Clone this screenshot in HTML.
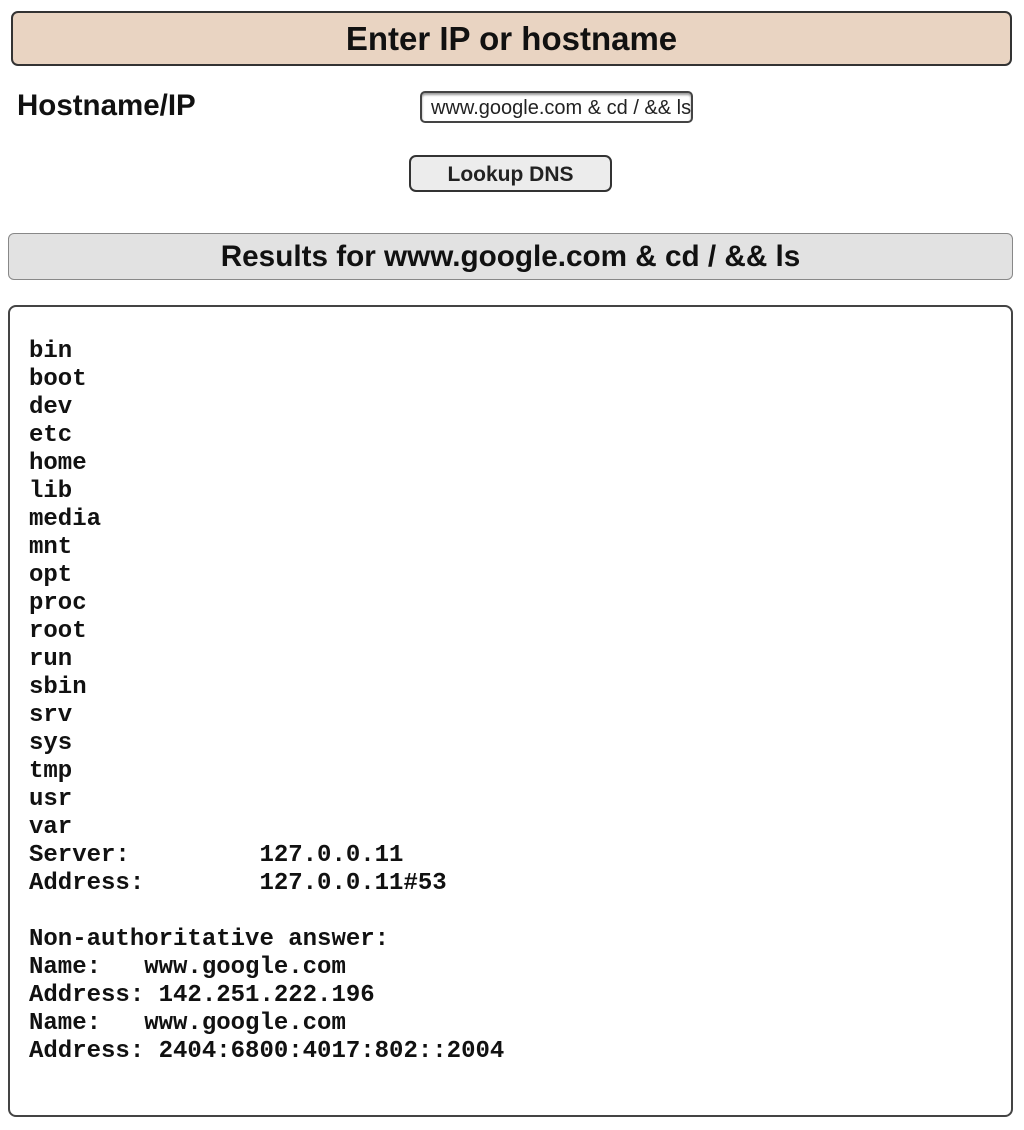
<!DOCTYPE html>
<html><head><meta charset="utf-8"><style>
body{margin:0;background:#fff;width:1024px;height:1130px;position:relative;font-family:"Liberation Sans",sans-serif;overflow:hidden}
.h1{position:absolute;left:11px;top:11px;width:997px;height:51px;background:#e9d4c2;border:2px solid #333;border-radius:7px;text-align:center;font-weight:bold;font-size:33px;line-height:52px;color:#111;box-sizing:content-box}
.lab{position:absolute;left:17px;top:89px;font-size:29.5px;font-weight:bold;color:#111}
.inp{position:absolute;left:420px;top:91px;width:273px;height:32px;border:2px solid #444;border-radius:5px;font-size:20px;line-height:30px;padding-left:9px;box-sizing:border-box;overflow:hidden;white-space:nowrap;color:#222;box-shadow:inset 0 2px 2px #999}
.btn{position:absolute;left:409px;top:155px;width:203px;height:37px;border:2px solid #333;border-radius:7px;background:#ececec;box-sizing:border-box;text-align:center;font-weight:bold;font-size:21px;line-height:36px;color:#222}
.h2{position:absolute;left:8px;top:233px;width:1005px;height:47px;background:#e2e2e2;border:1px solid #888;border-radius:6px;box-sizing:border-box;text-align:center;font-weight:bold;font-size:29.7px;line-height:45px;color:#111}
.res{position:absolute;left:8px;top:305px;width:1005px;height:812px;border:2px solid #444;border-radius:8px;box-sizing:border-box}
pre{position:absolute;left:19px;top:31px;margin:0;font-family:"Liberation Mono","Courier New",monospace;font-weight:bold;font-size:24px;line-height:28px;color:#111}
</style></head><body>
<div class="h1">Enter IP or hostname</div>
<div class="lab">Hostname/IP</div>
<div class="inp">www.google.com &amp; cd / &amp;&amp; ls</div>
<div class="btn">Lookup DNS</div>
<div class="h2">Results for www.google.com &amp; cd / &amp;&amp; ls</div>
<div class="res"><pre>bin
boot
dev
etc
home
lib
media
mnt
opt
proc
root
run
sbin
srv
sys
tmp
usr
var
Server:         127.0.0.11
Address:        127.0.0.11#53

Non-authoritative answer:
Name:   www.google.com
Address: 142.251.222.196
Name:   www.google.com
Address: 2404:6800:4017:802::2004</pre></div>
</body></html>
